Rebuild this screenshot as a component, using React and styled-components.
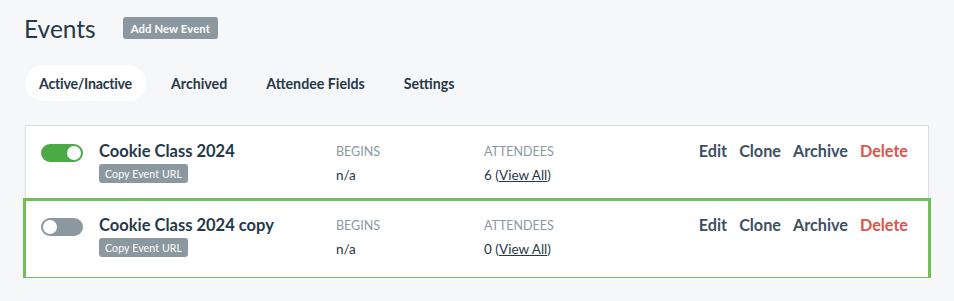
import React from "react";
import styled, { createGlobalStyle } from "styled-components";

const Global = createGlobalStyle`
  html, body { margin: 0; padding: 0; background: #f6f7f9; }
  body { font-family: Lato, "Noto Sans", sans-serif; color: #26394a; }
`;

const Page = styled.div`
  padding: 13px 25px 0 25px;
  width: 904px;
`;

const Header = styled.div`
  display: flex;
  align-items: center;
  gap: 27px;
  height: 30px;
`;

const Title = styled.h1`
  margin: 0;
  font-size: 24.5px;
  font-weight: 400;
  color: #26394a;
  margin-left: -1px;
`;

const SmallButton = styled.span`
  display: inline-flex;
  align-items: center;
  background: #8b989f;
  color: #fff;
  font-weight: ${(p) => p.$weight || 700};
  font-size: ${(p) => p.$size || 11.3}px;
  border-radius: 3px;
  padding: 0 ${(p) => p.$px || 8}px;
  height: ${(p) => p.$h || 22}px;
  letter-spacing: 0.1px;
`;

const Tabs = styled.nav`
  display: flex;
  align-items: center;
  gap: 11px;
  margin-top: 22px;
`;

const Tab = styled.div`
  height: 36px;
  display: flex;
  align-items: center;
  padding: 0 14px;
  border-radius: 18px;
  background: ${(p) => (p.$active ? "#fff" : "transparent")};
  font-size: 14.2px;
  font-weight: 700;
  letter-spacing: ${(p) => (p.$active ? "-0.25px" : "0")};
  color: #26394a;
`;

const Card = styled.div`
  margin-top: 24px;
  background: #fff;
  border: 1px solid #dcdfe3;
  box-shadow: 0 1px 2px rgba(0, 0, 0, 0.06);
`;

const Row = styled.div`
  display: grid;
  grid-template-columns: 58px 237px 148px 1fr auto;
  align-items: start;
  padding: ${(p) => (p.$first ? "17px 20px 0 15px" : "16px 20px 0 15px")};
  height: ${(p) => (p.$first ? 58 : 60)}px;
  outline: ${(p) => (p.$selected ? "3px solid #72bf5a" : "none")};
  position: relative;
`;

const Toggle = styled.div`
  width: 42px;
  height: 18px;
  border-radius: 9px;
  background: ${(p) => (p.$on ? "#4aaa46" : "#8b989f")};
  margin-top: 1px;
  display: flex;
  align-items: center;
  justify-content: ${(p) => (p.$on ? "flex-end" : "flex-start")};
  padding: 0 2px;
  box-sizing: border-box;
`;

const Knob = styled.span`
  width: 14px;
  height: 14px;
  border-radius: 50%;
  background: #fff;
`;

const NameCol = styled.div`
  display: flex;
  flex-direction: column;
  align-items: flex-start;
  gap: 4px;
  margin-top: -1px;
`;

const EventName = styled.div`
  font-size: 16.5px;
  font-weight: 700;
  color: #26394a;
  line-height: 18px;
`;

const InfoCol = styled.div`
  display: flex;
  flex-direction: column;
  gap: 8px;
  padding-top: 2px;
`;

const Label = styled.div`
  font-size: 12.5px;
  text-transform: uppercase;
  color: #8c98a2;
  line-height: 14px;
`;

const Value = styled.div`
  font-size: 13.5px;
  color: #26394a;
  line-height: 16px;
`;

const Link = styled.span`
  text-decoration: underline;
`;

const Actions = styled.div`
  display: flex;
  gap: 12px;
  margin-top: -1px;
`;

const Action = styled.span`
  font-size: 16.2px;
  font-weight: 700;
  color: ${(p) => (p.$danger ? "#e0534a" : "#3c5163")};
  line-height: 18px;
`;

const events = [
  { name: "Cookie Class 2024", on: true, attendees: 6 },
  { name: "Cookie Class 2024 copy", on: false, attendees: 0, selected: true },
];

export default function App() {
  return (
    <>
      <Global />
      <Page>
        <Header>
          <Title>Events</Title>
          <SmallButton>Add New Event</SmallButton>
        </Header>
        <Tabs>
          <Tab $active>Active/Inactive</Tab>
          <Tab>Archived</Tab>
          <Tab>Attendee Fields</Tab>
          <Tab>Settings</Tab>
        </Tabs>
        <Card>
          {events.map((e, i) => (
            <Row key={e.name} $first={i === 0} $selected={e.selected}>
              <Toggle $on={e.on}>
                <Knob />
              </Toggle>
              <NameCol>
                <EventName>{e.name}</EventName>
                <SmallButton $size={10.6} $h={19} $px={6} $weight={400}>
                  Copy Event URL
                </SmallButton>
              </NameCol>
              <InfoCol>
                <Label>Begins</Label>
                <Value>n/a</Value>
              </InfoCol>
              <InfoCol>
                <Label>Attendees</Label>
                <Value>
                  {e.attendees} (<Link>View All</Link>)
                </Value>
              </InfoCol>
              <Actions>
                <Action>Edit</Action>
                <Action>Clone</Action>
                <Action>Archive</Action>
                <Action $danger>Delete</Action>
              </Actions>
            </Row>
          ))}
        </Card>
      </Page>
    </>
  );
}
